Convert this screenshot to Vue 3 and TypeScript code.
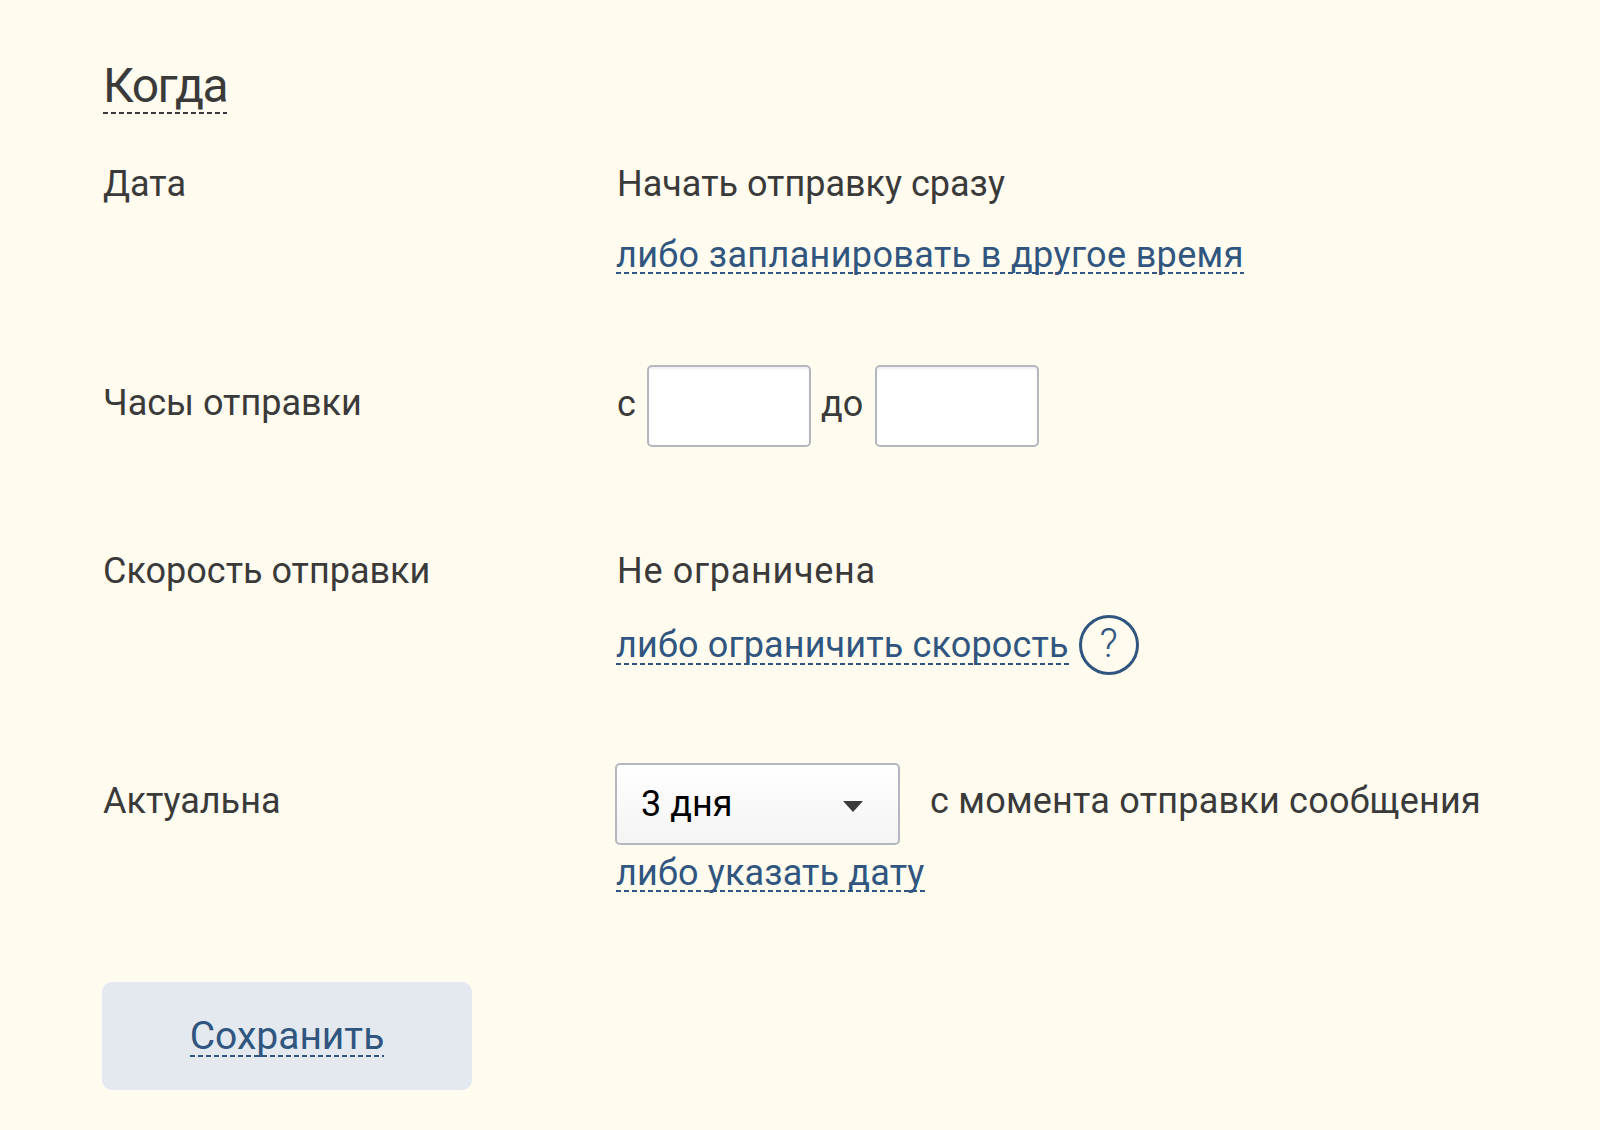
<script setup lang="ts">
const hours = ['с', 'до']
</script>

<template>
  <main class="page">
    <h2 class="title"><span class="dash">Когда</span></h2>

    <section class="row date-row">
      <div class="label">Дата</div>
      <div class="value">
        <div class="line">Начать отправку сразу</div>
        <div class="line link-line"><a class="link dash wide">либо запланировать в другое время</a></div>
      </div>
    </section>

    <section class="row hours-row">
      <div class="label">Часы отправки</div>
      <div class="value hours">
        <template v-for="h in hours" :key="h">
          <span class="hour-label">{{ h }}</span>
          <input class="time" type="text" />
        </template>
      </div>
    </section>

    <section class="row speed-row">
      <div class="label">Скорость отправки</div>
      <div class="value">
        <div class="line unlimited">Не ограничена</div>
        <div class="line link-line help-line">
          <a class="link dash">либо ограничить скорость</a>
          <span class="help">?</span>
        </div>
      </div>
    </section>

    <section class="row actual-row">
      <div class="label">Актуальна</div>
      <div class="value">
        <div class="actual">
          <div class="select"><span>3 дня</span><i class="caret"></i></div>
          <span class="since">с момента отправки сообщения</span>
        </div>
        <div class="line date-link"><a class="link dash">либо указать дату</a></div>
      </div>
    </section>

    <button class="save" type="button"><span class="dash btn-dash">Сохранить</span></button>
  </main>
</template>

<style>
html, body { margin: 0; background: #fffbef; }
</style>

<style scoped>
.page {
  box-sizing: border-box;
  width: 1600px;
  height: 1130px;
  padding: 58px 0 0 103px;
  background: #fffbef;
  color: #3a3a3a;
  font-family: Roboto, "Noto Sans", sans-serif;
  font-size: 36px;
  line-height: 44px;
  overflow: hidden;
}
.title {
  margin: 0;
  font-size: 48px;
  font-weight: 400;
  line-height: 56px;
  letter-spacing: -1.5px;
}
.dash {
  background-image: repeating-linear-gradient(90deg, currentColor 0 5px, transparent 5px 8px);
  background-size: 100% 2px;
  background-repeat: no-repeat;
  background-position: 0 100%;
}
.link, .btn-dash {
  background-position: 0 calc(100% - 2px);
}
.row {
  display: grid;
  grid-template-columns: 514px 1fr;
}
.date-row { margin-top: 48px; }
.hours-row { margin-top: 88px; }
.speed-row { margin-top: 102px; }
.actual-row { margin-top: 96px; }
.line { height: 44px; }
.unlimited { letter-spacing: 0.7px; }
.link-line { margin-top: 27px; }
.speed-row .link-line { margin-top: 30px; }
.link { color: #30567f; letter-spacing: 0.15px; margin-left: -1px; }
.wide { letter-spacing: 0.36px; }
.hours {
  display: flex;
  align-items: center;
  height: 82px;
}
.hours-row .label { line-height: 76px; }
.hour-label { width: 30px; padding-bottom: 5px; }
.hour-label:nth-of-type(2) { width: 54px; }
.time {
  box-sizing: border-box;
  width: 164px;
  height: 82px;
  margin: 0 10px 0 0;
  border: 2.5px solid #b4b7bd;
  border-radius: 5px;
  background: #fff;
  box-shadow: inset 0 2px 2px rgba(0, 0, 0, 0.06);
}
.help-line { display: flex; align-items: center; gap: 10px; }
.help {
  box-sizing: border-box;
  width: 60px;
  height: 60px;
  border: 3px solid #30567f;
  border-radius: 50%;
  color: #30567f;
  font-size: 40px;
  font-weight: 300;
  text-align: center;
  line-height: 52px;
}
.actual { display: flex; align-items: center; gap: 30px; margin-left: -2px; }
.since { letter-spacing: 0.22px; padding-bottom: 6px; }
.select {
  position: relative;
  box-sizing: border-box;
  width: 285px;
  height: 82px;
  padding-left: 24px;
  border: 2.5px solid #b4b7bd;
  border-radius: 5px;
  background: linear-gradient(#fff, #f4f4f4);
  color: #000;
  line-height: 78px;
}
.caret {
  position: absolute;
  right: 35px;
  top: 36px;
  border-left: 10px solid transparent;
  border-right: 10px solid transparent;
  border-top: 11px solid #3a3a3a;
}
.actual-row .label { line-height: 76px; }
.date-link { margin-top: 6px; }
.save {
  display: block;
  width: 370px;
  height: 108px;
  margin-top: 87px;
  margin-left: -1px;
  border: 0;
  border-radius: 10px;
  background: #e3e9ef;
  color: #30567f;
  font: inherit;
  font-size: 39px;
}
</style>
